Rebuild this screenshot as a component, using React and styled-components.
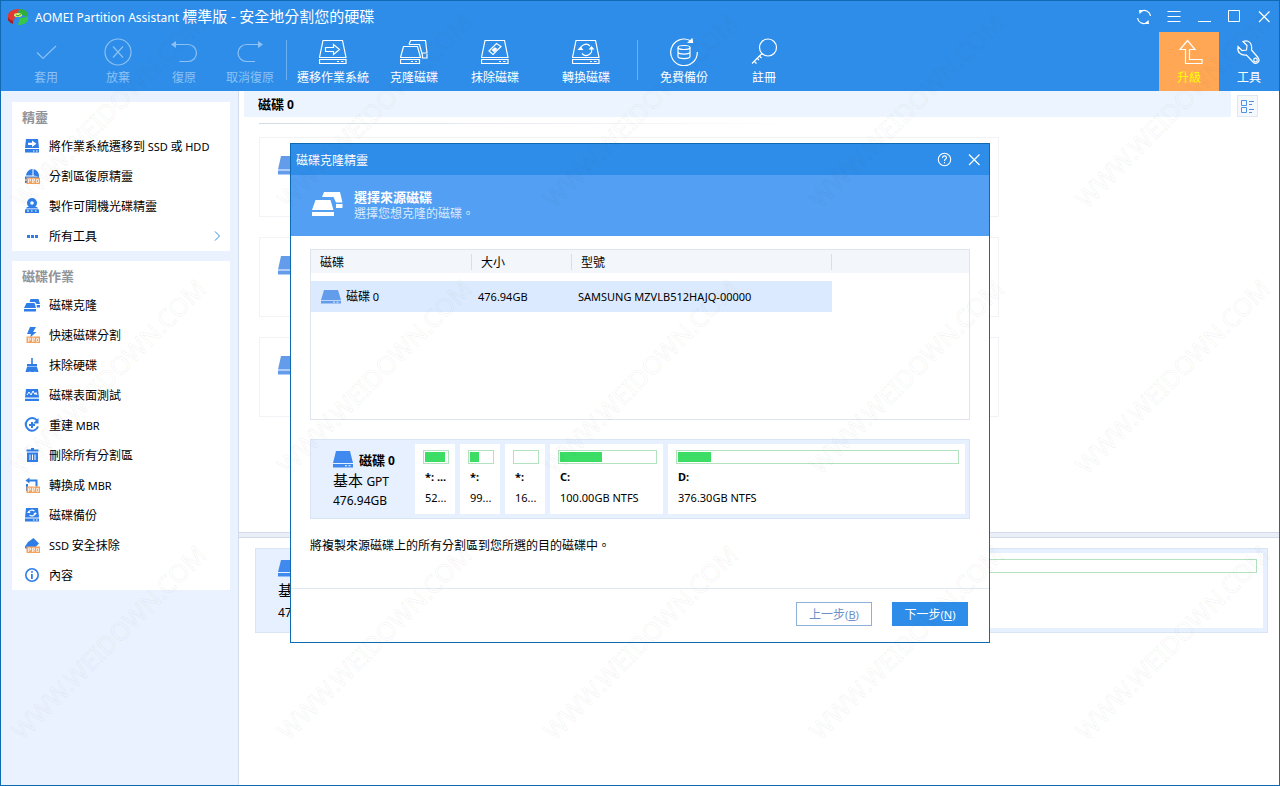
import React from "react";
import styled, { createGlobalStyle, css } from "styled-components";

const GlobalStyle = createGlobalStyle`
  *, *::before, *::after { box-sizing: border-box; }
  body { margin: 0; background: #fff; }
  button { font: inherit; color: inherit; background: none; border: 0; padding: 0; }
`;

/* ---------------------------------------------------------------- window */

const Window = styled.div`
  position: relative;
  display: flex;
  flex-direction: column;
  min-height: 100vh;
  border: 1px solid #0f6ab4;
  background: #fff;
  color: #000;
  font-family: "Noto Sans CJK TC", sans-serif;
  font-size: 12px;
  line-height: 16px;
`;

const Latin = styled.span`
  font-family: "Noto Sans", "Noto Sans CJK TC", sans-serif;
  font-size: ${(p) => (p.$large ? 12 : 11)}px;
`;

const Header = styled.header`
  background: #2e8de8;
  color: #fff;
`;

const TitleBar = styled.div`
  display: flex;
  align-items: center;
  height: 31px;
  padding: 0 7px 0 6px;
`;

const Title = styled.h1`
  flex: 1;
  margin: 0 0 0 6px;
  font-size: 15px;
  font-weight: 400;
  line-height: 20px;
  white-space: nowrap;
`;

const WindowButtons = styled.div`
  display: flex;
  gap: 14px;
`;

const WindowButton = styled.button`
  display: flex;
  width: 16px;
  height: 16px;
`;

const Toolbar = styled.div`
  display: flex;
  height: 59px;
  padding-left: 9px;
`;

const ToolButton = styled.button`
  display: flex;
  flex-direction: column;
  align-items: center;
  gap: 3px;
  width: ${(p) => p.$width}px;
  padding-top: 6px;
  white-space: nowrap;
  &:disabled { color: #8cc1f5; }
  ${(p) =>
    p.$highlight &&
    css`
      background: #ffa755;
      svg { color: #fff; }
      color: #ffff00;
    `}
`;

const ToolDivider = styled.span`
  width: 1px;
  height: 40px;
  margin: 8px 0 0 ${(p) => p.$gap || 0}px;
  background: #6cb0f2;
`;

const Spacer = styled.span`
  flex: 1;
`;

const Body = styled.div`
  display: flex;
  flex: 1;
`;

/* --------------------------------------------------------------- sidebar */

const Sidebar = styled.nav`
  display: flex;
  flex-direction: column;
  gap: 10px;
  width: 238px;
  padding: 11px 8px 11px 11px;
  background: #eaf2ff;
  border-right: 1px solid #d3dceb;
`;

const SideGroup = styled.section`
  background: #fff;
`;

const SideHeading = styled.h2`
  margin: 0;
  padding: 0 10px;
  color: #909399;
  font-size: 13px;
  font-weight: 700;
  line-height: 29px;
`;

const SideItem = styled.button`
  display: flex;
  align-items: center;
  width: 100%;
  height: 30px;
  padding: 0 8px 0 12px;
  text-align: left;
  white-space: nowrap;
`;

const SideLabel = styled.span`
  flex: 1;
  margin-left: 9px;
`;

/* ------------------------------------------------------------- main area */

const Main = styled.main`
  display: flex;
  flex: 1;
  flex-direction: column;
  min-width: 0;
`;

const DiskTabRow = styled.div`
  display: flex;
  height: 26px;
  padding: 0 21px 0 5px;
`;

const DiskTab = styled.h2`
  flex: 1;
  margin: 0 6px 0 0;
  padding-left: 14px;
  background: #ecf4ff;
  font-size: 13px;
  font-weight: 700;
  line-height: 26px;
`;

const ViewButton = styled.button`
  display: flex;
  align-items: center;
  justify-content: center;
  width: 21px;
  height: 22px;
  margin-top: 4px;
  border: 1px solid #e1e7f0;
  background: #f5f8fc;
`;

const FadeLine = styled.div`
  height: 1px;
  margin: 6px 480px 0 20px;
  background: linear-gradient(to right, #d5dbe6, #fff);
`;

const VolumeList = styled.div`
  display: flex;
  flex: 1 0 408px;
  flex-direction: column;
  gap: 20px;
  padding: 13px 280px 0 20px;
`;

const VolumeCard = styled.div`
  height: 80px;
  padding: 18px;
  border: 1px solid #f2f3f7;
`;

const Splitter = styled.div`
  height: 6px;
  border: 1px solid #d3dbe8;
  border-width: 1px 0;
  background: #eaeff7;
`;

const LowerPane = styled.div`
  flex: 0 0 247px;
  padding: 10px 11px 0 16px;
`;

/* -------------------------------------------------------------- disk map */

const DiskPanel = styled.div`
  display: flex;
  gap: 5px;
  height: ${(p) => (p.$tall ? 85 : 80)}px;
  padding: 4px;
  border: 1px solid #d9e5f7;
  background: #e6f0ff;
`;

const DiskSummary = styled.div`
  flex: 0 0 95px;
  padding: 7px 0 0 18px;
  line-height: ${(p) => (p.$tall ? 20 : 18)}px;
  white-space: nowrap;
`;

const DiskName = styled.div`
  display: flex;
  gap: 6px;
  height: 20px;
  font-size: 13px;
  font-weight: 700;
`;

const DiskType = styled.div`
  font-size: 15px;
`;

const Partition = styled.div`
  flex: ${(p) => (p.$width ? `0 0 ${p.$width}px` : "1")};
  min-width: 0;
  padding: 6px 6px 0 8px;
  background: #fff;
  font-family: "Noto Sans", sans-serif;
  font-size: 11px;
  white-space: nowrap;
`;

const Usage = styled.div`
  height: 14px;
  padding: 1px;
  border: 1px solid #b3e2bf;
`;

const UsageFill = styled.div`
  height: 10px;
  background: #3bdd64;
`;

const PartitionName = styled.div`
  margin: 5px 0 0 2px;
  font-weight: 700;
`;

const PartitionSize = styled.div`
  margin: 5px 0 0 2px;
`;

/* ---------------------------------------------------------------- dialog */

const DialogLayer = styled.div`
  position: absolute;
  inset: 0;
  display: flex;
  align-items: center;
  justify-content: center;
`;

const Dialog = styled.section`
  width: 700px;
  max-width: 100%;
  border: 1px solid #0f6ab4;
  background: #fff;
`;

const DialogTitleBar = styled.div`
  display: flex;
  align-items: center;
  gap: 14px;
  height: 31px;
  padding: 0 7px 0 5px;
  background: #2e8de8;
  color: #fff;
`;

const DialogTitle = styled.h2`
  flex: 1;
  margin: 0;
  font-size: 12px;
  font-weight: 400;
`;

const Banner = styled.div`
  display: flex;
  gap: 11px;
  height: 61px;
  padding: 14px 20px;
  background: #529ff3;
  color: #d9eafd;
`;

const BannerHeading = styled.h3`
  margin: 0;
  color: #fff;
  font-size: 13px;
  font-weight: 700;
`;

const DialogBody = styled.div`
  padding: 13px 19px 35px;
`;

const TableBox = styled.div`
  height: 171px;
  margin-bottom: 19px;
  border: 1px solid #dfe4ee;
`;

const DiskTable = styled.table`
  width: 100%;
  table-layout: fixed;
  border-collapse: collapse;
  text-align: left;
  tbody::before {
    content: "";
    display: block;
    height: 8px;
  }
`;

const HeadCell = styled.th`
  width: ${(p) => (p.$width ? `${p.$width}px` : "auto")};
  height: 23px;
  padding: 0;
  background: #f3f6fb;
  font-weight: 400;
`;

const HeadLabel = styled.div`
  padding-left: 9px;
  height: 16px;
  border-right: 1px solid #d9dee8;
`;

const Cell = styled.td`
  height: 31px;
  padding: 0 0 0 6px;
  background: #dceaff;
  white-space: nowrap;
`;

const DiskCell = styled.div`
  display: flex;
  align-items: center;
  gap: 5px;
  padding-left: 4px;
`;

const Note = styled.p`
  margin: 18px 0 0;
`;

const DialogFooter = styled.footer`
  display: flex;
  justify-content: flex-end;
  gap: 20px;
  padding: 13px 21px 16px;
  border-top: 1px solid #e2e8f2;
`;

const PushButton = styled.button`
  width: 76px;
  height: 24px;
  border: 1px solid ${(p) => (p.$primary ? "#2e8de8" : "#8fb0d9")};
  background: ${(p) => (p.$primary ? "#2e8de8" : "#fff")};
  color: ${(p) => (p.$primary ? "#fff" : "#6c90c6")};
`;

/* ------------------------------------------------------------- watermark */

const WatermarkLayer = styled.div`
  position: absolute;
  inset: 0;
  overflow: hidden;
  pointer-events: none;
`;

const WatermarkGrid = styled.div`
  display: grid;
  grid-template-columns: repeat(5, 266px);
  grid-auto-rows: 266px;
  place-items: center;
  margin: -24px 0 0 -26px;
`;

const WatermarkText = styled.span`
  color: transparent;
  font-family: "Noto Sans", sans-serif;
  font-size: 25px;
  line-height: 20px;
  transform: rotate(-45deg);
  -webkit-text-stroke: 1px rgba(60, 60, 60, 0.06);
`;

/* ----------------------------------------------------------------- icons */

function Line({ size = 28, width = 1.2, children }) {
  return (
    <svg width={size} height={size} viewBox={`0 0 ${size} ${size}`} fill="none" stroke="currentColor" strokeWidth={width} aria-hidden="true">
      {children}
    </svg>
  );
}

function DriveOutline({ children }) {
  return (
    <Line>
      <path d="M4 2.500h19.500l3.500 17H.5z M.5 21.500H27v4H.5z" />
      <path d="M18 23.500h2 M22 23.500h2.500" />
      {children}
    </Line>
  );
}

const toolIcons = {
  apply: (
    <Line><path d="M5 14.500l6 6L24 8" /></Line>
  ),
  discard: (
    <Line><circle cx="14" cy="14" r="13" /><path d="M9 8.500l10 11M19 8.500L9 19.500" /></Line>
  ),
  undo: (
    <Line><path d="M5 6.500h13a8.500 8.500 0 0 1 0 17H9.500" /><path d="M1 6.500L6 3v7z" fill="currentColor" stroke="none" /></Line>
  ),
  redo: (
    <Line><path d="M22 6.500H10.500a8.500 8.500 0 0 0 0 17H19" /><path d="M27 6.500L22 3v7z" fill="currentColor" stroke="none" /></Line>
  ),
  migrate: (
    <DriveOutline><path d="M6.500 9.500h8V6.500l6 5-6 5v-3h-8z" /></DriveOutline>
  ),
  clone: (
    <Line>
      <path d="M3.500 8.500h14l3 11H.500z M.500 21.500h19v4h-19z M11 23.500h2 M15 23.500h2" />
      <path d="M9 6.500l1.500-4h15l1.500 12.500h-5 M9 6.500h10.500l3 11v2.500H27V16" />
    </Line>
  ),
  wipe: (
    <DriveOutline>
      <path d="M8 13l7.500-7.500 4.500 3-8 8z" />
      <path d="M11.500 12l2.500-2 1.500 1-2.500 2.500z" fill="currentColor" />
    </DriveOutline>
  ),
  convert: (
    <DriveOutline>
      <path d="M8.500 12a5.500 5.500 0 0 1 9.500-4M19.500 10.500a5.500 5.500 0 0 1-9.500 5" />
      <path d="M5.500 12h6l-3-3.500z M16.500 11.500h6l-3-3.500z" fill="currentColor" stroke="none" />
    </DriveOutline>
  ),
  backup: (
    <Line>
      <path d="M20 2.500A13.300 13.300 0 1 0 27.300 14" />
      <path d="M18.500 4.500L22 1l.5 3.500z" fill="currentColor" />
      <ellipse cx="14" cy="9.500" rx="6" ry="2" />
      <path d="M8 9.500v9c0 2.700 12 2.700 12 0v-9M8 14c0 2.700 12 2.700 12 0" />
    </Line>
  ),
  register: (
    <Line><circle cx="18" cy="9.500" r="8.500" /><path d="M12 15.500L2 25.500M4 23l2.500 2.500M7 20l2 2M9.500 18l2 2" /></Line>
  ),
  upgrade: (
    <Line><path d="M12.500 2.500L5 11.500h5.500v14H27v-4H14.500v-10H20z" /></Line>
  ),
  tools: (
    <Line>
      <path d="M8 3.500l4 4-.5 4.500-4.500.5-4-4C2 14 5 17.500 11.500 17l6.500 7c3 3.500 8-.500 5-4.500l-6.500-7.500C17.500 5 13.500 1.500 8 3.500z" />
      <circle cx="20.500" cy="22" r="1.800" />
    </Line>
  ),
};

function Disk({ width = 20, height = 17, color = "#4089ee" }) {
  return (
    <svg width={width} height={height} viewBox="0 0 20 17" preserveAspectRatio="none" fill={color} aria-hidden="true">
      <path d="M3 0h14l3 12H0z M0 13h20v3.500H0z" />
      <path d="M12 14.300h2v1h-2z M15.500 14.300h2v1h-2z" fill="#fff" />
    </svg>
  );
}

function CloneDisks() {
  return (
    <svg width="32" height="32" viewBox="0 0 32 32" fill="#fff" aria-hidden="true">
      <path d="M13 3h16l2.500 10.500H25L22.500 8H11z M25 15h6.500v4H25z" />
      <path d="M4.500 11h15l3 10H1z M1 23h22v4H1z" />
    </svg>
  );
}

function ProBadge() {
  return (
    <g>
      <path d="M2.500 9.500h13.500V16H2.500z" fill="#f5a35c" />
      <path d="M4.500 15v-4h2v2h-2M8.500 15v-4h2v2h-2l2 2M12.500 11.500h2v3h-2z" fill="none" stroke="#fff" strokeWidth=".7" />
    </g>
  );
}

function Glyph({ children }) {
  return (
    <svg width="16" height="16" viewBox="0 0 16 16" fill="#2f7de6" aria-hidden="true">
      {children}
    </svg>
  );
}

const glyphs = {
  migrate: (
    <Glyph>
      <path d="M2 1h12l1 9H1z M1 11h14v3.500H1z" />
      <path d="M4 4.800h4V2.500l4.500 3.300L8 9V7H4z M9 12.500h1.500v1H9z M12 12.500h1.500v1H12z" fill="#fff" />
    </Glyph>
  ),
  restore: (
    <Glyph>
      <path d="M8.500 1A7 7 0 0 0 2 7.500h6.500z M9.500 1v6.500l5.500 1A7 7 0 0 0 9.500 1z M1 8.500h14v3H1z M1 12.500h2V15H1z" />
      <ProBadge />
    </Glyph>
  ),
  bootable: (
    <Glyph>
      <path d="M3 9h10l2 3v3H1v-3z" /><circle cx="8" cy="5" r="5" /><circle cx="8" cy="5" r="1.800" fill="#fff" />
      <path d="M1.500 10.800h13" stroke="#fff" strokeWidth=".8" fill="none" />
      <path d="M3 13h2M7 13h1.500M11 13h1.500" stroke="#fff" fill="none" />
    </Glyph>
  ),
  more: (
    <Glyph><path d="M3 7h3v3H3z M7 7h3v3H7z M11 7h3v3h-3z" /></Glyph>
  ),
  clone: (
    <Glyph>
      <path d="M6.500 2h8l1.500 5h-3.500L11 5H5.500z M12.500 8h3.500v2.500h-3z M2.500 6h8l1.500 5H0z M0 12h12v2.500H0z" />
    </Glyph>
  ),
  quick: (
    <Glyph><path d="M6 0h6L9 5h3.500L6 10.500 7 7H3z" /><ProBadge /></Glyph>
  ),
  wipe: (
    <Glyph><path d="M7.200 1h1.600v6H13v2.500H3V7h4.200z M3 10h10l1.500 5h-3l-.5-1-.5 1h-4l-.5-1-.5 1H1.500z" /></Glyph>
  ),
  surface: (
    <Glyph>
      <path d="M2 2h12l1 8.500H1z M1 11.800h14V14H1z" />
      <path d="M3 8l2-3 2 3 2-4 2 3.500 1-2 1 2.500" fill="none" stroke="#fff" />
    </Glyph>
  ),
  rebuild: (
    <Glyph>
      <path d="M13 3.500A6.300 6.300 0 1 0 14 9.500" fill="none" stroke="#2f7de6" strokeWidth="2" />
      <path d="M14.500 1v5.500H9z M7 5h2v6H7z M5 7h6v2H5z" />
    </Glyph>
  ),
  remove: (
    <Glyph>
      <path d="M7 1h3v1.500h4.500v2h-12v-2H7z M3 5.500h11V15H3z" />
      <path d="M6 7.500v5.500M8.500 7.500v5.500M11 7.500v5.500" stroke="#fff" fill="none" />
    </Glyph>
  ),
  toMbr: (
    <Glyph>
      <path d="M1.500 3.500l4-3v2h8v7h-2v-5h-6v2z M2 7h2v7H2z" />
      <ProBadge />
    </Glyph>
  ),
  backup: (
    <Glyph>
      <path d="M2 1h12l1 9.500H1z M1 11.500h14v3H1z" />
      <path d="M4.500 6a3.500 3.500 0 0 1 6-1.800M11.500 5.500a3.500 3.500 0 0 1-6 2.300" fill="none" stroke="#fff" strokeWidth="1.200" />
      <path d="M3 6h3.500L5 3.500z M9.500 6H13L11 8z M9 12.500h1.500v1H9z M12 12.500h1.500v1H12z" fill="#fff" />
    </Glyph>
  ),
  ssd: (
    <Glyph><path d="M9.500 1l5.500 5.500-4 4H3v1H1V9.500L4 5z" /><ProBadge /></Glyph>
  ),
  info: (
    <Glyph>
      <circle cx="8" cy="8" r="6.200" fill="none" stroke="#2f7de6" strokeWidth="1.600" />
      <path d="M7.200 4h1.600v1.700H7.200z M7 7h1.800v5H7z" />
    </Glyph>
  ),
};

function Logo() {
  return (
    <svg width="22" height="18" viewBox="0 0 22 18" aria-hidden="true">
      <path d="M1 7C2 3 7 1 12 1l-1 4-4 2 1 2-2 6c-4-1-6-4-5-8z" fill="#e03a32" />
      <path d="M1 9v3c1 2 3 3 5 4v-3c-3-1-4-2-5-4z" fill="#a81f1d" />
      <path d="M13 1c5 0 8 3 8 6 0 1-1 2-1 2l-7-3-2-1z" fill="#2fae3c" />
      <path d="M20 9c1-1 1-1 1-2v5c-1 3-5 5-10 5l2-7z" fill="#35c64a" />
      <ellipse cx="11" cy="7" rx="4" ry="2" fill="#d8f06a" />
      <path d="M9 7l2 1 3-2" fill="none" stroke="#2b9a34" />
    </svg>
  );
}

function CloseIcon() {
  return <Line size={16} width={1.2}><path d="M3 2.500l10.500 10.500M13.500 2.500L3 13" /></Line>;
}

/* ------------------------------------------------------------------ data */

const tools = [
  { icon: "apply", label: "套用", width: 72, disabled: true },
  { icon: "discard", label: "放棄", width: 72, disabled: true },
  { icon: "undo", label: "復原", width: 60, disabled: true },
  { icon: "redo", label: "取消復原", width: 72, disabled: true },
  { divider: true },
  { icon: "migrate", label: "遷移作業系統", width: 92 },
  { icon: "clone", label: "克隆磁碟", width: 70 },
  { icon: "wipe", label: "抹除磁碟", width: 92 },
  { icon: "convert", label: "轉換磁碟", width: 90 },
  { divider: true, gap: 6 },
  { icon: "backup", label: "免費備份", width: 92 },
  { icon: "register", label: "註冊", width: 68 },
];

const sideGroups = [
  {
    title: "精靈",
    items: [
      { icon: "migrate", label: <>將作業系統遷移到 <Latin>SSD</Latin> 或 <Latin>HDD</Latin></> },
      { icon: "restore", label: "分割區復原精靈" },
      { icon: "bootable", label: "製作可開機光碟精靈" },
      { icon: "more", label: "所有工具", arrow: true },
    ],
  },
  {
    title: "磁碟作業",
    items: [
      { icon: "clone", label: "磁碟克隆" },
      { icon: "quick", label: "快速磁碟分割" },
      { icon: "wipe", label: "抹除硬碟" },
      { icon: "surface", label: "磁碟表面測試" },
      { icon: "rebuild", label: <>重建 <Latin>MBR</Latin></> },
      { icon: "remove", label: "刪除所有分割區" },
      { icon: "toMbr", label: <>轉換成 <Latin>MBR</Latin></> },
      { icon: "backup", label: "磁碟備份" },
      { icon: "ssd", label: <><Latin>SSD</Latin> 安全抹除</> },
      { icon: "info", label: "內容" },
    ],
  },
];

const partitions = [
  { name: "*: ...", size: "52...", used: 91, width: 40 },
  { name: "*:", size: "99...", used: 41, width: 40 },
  { name: "*:", size: "16...", used: 0, width: 40 },
  { name: "C:", size: "100.00GB NTFS", used: 44, width: 113 },
  { name: "D:", size: "376.30GB NTFS", used: 12 },
];

/* ------------------------------------------------------------ components */

function Summary({ tall }) {
  return (
    <DiskSummary $tall={tall}>
      <DiskName>
        <Disk />
        {!tall && <span>磁碟 <Latin $large>0</Latin></span>}
      </DiskName>
      <DiskType>基本 <Latin $large>GPT</Latin></DiskType>
      <Latin $large>476.94GB</Latin>
    </DiskSummary>
  );
}

function AppHeader() {
  return (
    <Header>
      <TitleBar>
        <Logo />
        <Title><Latin $large>AOMEI Partition Assistant</Latin> 標準版 - 安全地分割您的硬碟</Title>
        <WindowButtons>
          <WindowButton aria-label="Refresh">
            <Line size={16} width={1.2}>
              <path d="M1.500 9a6.500 6.500 0 0 0 9 5M14.500 7a6.500 6.500 0 0 0-9-5" />
              <path d="M3 1h5L3.500 5z M13 15H8l4.500-4z" fill="currentColor" stroke="none" />
            </Line>
          </WindowButton>
          <WindowButton aria-label="Menu">
            <Line size={16} width={1}><path d="M1.500 2.500h13M1.500 7.500h13M1.500 12.500h13" /></Line>
          </WindowButton>
          <WindowButton aria-label="Minimize">
            <Line size={16} width={1}><path d="M2 12.500h13" /></Line>
          </WindowButton>
          <WindowButton aria-label="Maximize">
            <Line size={16} width={1}><path d="M2.500 1.500h11v11h-11z" /></Line>
          </WindowButton>
          <WindowButton aria-label="Close"><CloseIcon /></WindowButton>
        </WindowButtons>
      </TitleBar>
      <Toolbar>
        {tools.map((t, i) =>
          t.divider ? (
            <ToolDivider key={i} $gap={t.gap} />
          ) : (
            <ToolButton key={i} $width={t.width} disabled={t.disabled}>
              {toolIcons[t.icon]}
              {t.label}
            </ToolButton>
          )
        )}
        <Spacer />
        <ToolButton $width={60} $highlight>{toolIcons.upgrade}升級</ToolButton>
        <ToolButton $width={60}>{toolIcons.tools}工具</ToolButton>
      </Toolbar>
    </Header>
  );
}

function CloneDialog() {
  return (
    <Dialog role="dialog" aria-labelledby="clone-title">
      <DialogTitleBar>
        <DialogTitle id="clone-title">磁碟克隆精靈</DialogTitle>
        <WindowButton aria-label="Help">
          <Line size={16} width={1.1}>
            <circle cx="8.500" cy="7.500" r="6.200" />
            <path d="M6.500 6c0-3 4-2.500 4-.3C10.500 7 8.500 7 8.500 9M8.500 10v1.300" />
          </Line>
        </WindowButton>
        <WindowButton aria-label="Close"><CloseIcon /></WindowButton>
      </DialogTitleBar>
      <Banner>
        <CloneDisks />
        <div>
          <BannerHeading>選擇來源磁碟</BannerHeading>
          選擇您想克隆的磁碟。
        </div>
      </Banner>
      <DialogBody>
        <TableBox>
          <DiskTable>
            <thead>
              <tr>
                <HeadCell $width={161}><HeadLabel>磁碟</HeadLabel></HeadCell>
                <HeadCell $width={100}><HeadLabel>大小</HeadLabel></HeadCell>
                <HeadCell $width={260}><HeadLabel>型號</HeadLabel></HeadCell>
                <HeadCell />
              </tr>
            </thead>
            <tbody>
              <tr>
                <Cell>
                  <DiskCell>
                    <Disk height={14} color="#639ceb" />
                    <span>磁碟 <Latin>0</Latin></span>
                  </DiskCell>
                </Cell>
                <Cell><Latin>476.94GB</Latin></Cell>
                <Cell><Latin>SAMSUNG MZVLB512HAJQ-00000</Latin></Cell>
              </tr>
            </tbody>
          </DiskTable>
        </TableBox>
        <DiskPanel>
          <Summary />
          {partitions.map((p, i) => (
            <Partition key={i} $width={p.width}>
              <Usage><UsageFill style={{ width: `${p.used}%` }} /></Usage>
              <PartitionName>{p.name}</PartitionName>
              <PartitionSize>{p.size}</PartitionSize>
            </Partition>
          ))}
        </DiskPanel>
        <Note>將複製來源磁碟上的所有分割區到您所選的目的磁碟中。</Note>
      </DialogBody>
      <DialogFooter>
        <PushButton>上一步<Latin>(<u>B</u>)</Latin></PushButton>
        <PushButton $primary>下一步<Latin>(<u>N</u>)</Latin></PushButton>
      </DialogFooter>
    </Dialog>
  );
}

export default function App() {
  return (
    <Window>
      <GlobalStyle />
      <AppHeader />
      <Body>
        <Sidebar>
          {sideGroups.map((group) => (
            <SideGroup key={group.title}>
              <SideHeading>{group.title}</SideHeading>
              {group.items.map((item) => (
                <SideItem key={item.icon}>
                  {glyphs[item.icon]}
                  <SideLabel>{item.label}</SideLabel>
                  {item.arrow && (
                    <svg width="10" height="10" viewBox="0 0 10 10" fill="none" stroke="#2e8de8" aria-hidden="true">
                      <path d="M3 .500L7.500 5 3 9.500" />
                    </svg>
                  )}
                </SideItem>
              ))}
            </SideGroup>
          ))}
        </Sidebar>
        <Main>
          <DiskTabRow>
            <DiskTab>磁碟 <Latin $large>0</Latin></DiskTab>
            <ViewButton aria-label="View">
              <Line size={15} width={1}>
                <path d="M1.500 1.500h5v5h-5z M1.500 8.500h5v5h-5z M9 2.500h5M9 5.500h3M9 10.500h5M9 13.500h3" stroke="#4f93e6" />
              </Line>
            </ViewButton>
          </DiskTabRow>
          <FadeLine />
          <VolumeList>
            {[0, 1, 2].map((n) => (
              <VolumeCard key={n}><Disk height={19} color="#639ceb" /></VolumeCard>
            ))}
          </VolumeList>
          <Splitter />
          <LowerPane>
            <DiskPanel $tall>
              <Summary tall />
              <Partition><Usage /></Partition>
            </DiskPanel>
          </LowerPane>
        </Main>
      </Body>
      <DialogLayer><CloneDialog /></DialogLayer>
      <WatermarkLayer aria-hidden="true">
        <WatermarkGrid>
          {Array.from({ length: 15 }, (_, i) => (
            <WatermarkText key={i}>WWW.WEIDOWN.COM</WatermarkText>
          ))}
        </WatermarkGrid>
      </WatermarkLayer>
    </Window>
  );
}
